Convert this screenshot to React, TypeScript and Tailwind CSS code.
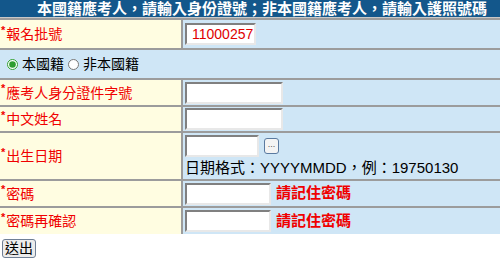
import React, { useState } from "react";

const cjk = "font-['Liberation_Sans','Noto_Sans_CJK_TC',sans-serif]";

const Label = ({ text }: { text: string }) => (
  <div className="flex w-[181px] shrink-0 items-center bg-[#fffde1] pl-[1px] text-[14px] leading-none text-[#f00000]">
    <span className="mr-[1px] -translate-y-[4px] text-[11px] font-bold">*</span>
    <span>{text}</span>
  </div>
);

const TextInput = ({ width, value }: { width: string; value?: string }) => (
  <input
    type="text"
    defaultValue={value}
    className={`${width} h-[22px] border-2 border-t-[#808080] border-l-[#808080] border-r-[#e8e8e8] border-b-[#e8e8e8] bg-white pl-[5px] pr-0 text-[14px] text-[#e00000] outline-none`}
  />
);

const Row = ({
  label,
  height,
  children,
}: {
  label: string;
  height: string;
  children: React.ReactNode;
}) => (
  <div className={`flex gap-[2px] ${height}`}>
    <Label text={label} />
    <div className="flex flex-1 items-center bg-[#cfe6f6] pl-[2px]">{children}</div>
  </div>
);

export default function App() {
  const [nationality, setNationality] = useState("local");

  return (
    <div className={`w-[500px] h-[261px] bg-white ${cjk}`}>
      <div className="flex flex-col gap-[2px] bg-[#9c9c9c]">
        <div className="h-[18px] bg-[#13578b] pl-[37px] text-[15px] leading-[17px] font-bold text-white border-b border-[#c8c8c8]">
          本國籍應考人，請輸入身份證號；非本國籍應考人，請輸入護照號碼
        </div>
        <Row label="報名批號" height="h-[28px]">
          <TextInput width="w-[71px]" value="11000257" />
        </Row>
        <div className="flex h-[28px] items-center gap-[4px] bg-[#cfe6f6] pl-[7px] text-[14px] text-black">
          <label className="flex items-center gap-[4px]">
            <input
              type="radio"
              checked={nationality === "local"}
              onChange={() => setNationality("local")}
              className="h-[11px] w-[11px] accent-[#2f9e2f]"
            />
            本國籍
          </label>
          <label className="flex items-center gap-[4px]">
            <input
              type="radio"
              checked={nationality === "foreign"}
              onChange={() => setNationality("foreign")}
              className="h-[11px] w-[11px]"
            />
            非本國籍
          </label>
        </div>
        <Row label="應考人身分證件字號" height="h-[25px]">
          <TextInput width="w-[98px]" />
        </Row>
        <Row label="中文姓名" height="h-[24px]">
          <TextInput width="w-[98px]" />
        </Row>
        <div className="flex h-[46px] gap-[2px]">
          <Label text="出生日期" />
          <div className="flex flex-1 flex-col justify-center gap-[2px] bg-[#cfe6f6] pl-[2px]">
            <div className="flex items-center gap-[5px]">
              <TextInput width="w-[74px]" />
              <button className="flex h-[16px] w-[15px] items-start justify-center rounded-[3px] border border-[#5a7aa0] bg-[#f4f4f4] text-[9px] leading-[10px] text-[#555]">
                ...
              </button>
            </div>
            <div className="text-[15px] leading-[18px] text-black">
              日期格式：YYYYMMDD，例：19750130
            </div>
          </div>
        </div>
        <Row label="密碼" height="h-[25px]">
          <TextInput width="w-[86px]" />
          <span className="ml-[5px] text-[15px] font-bold text-[#f00000]">請記住密碼</span>
        </Row>
        <Row label="密碼再確認" height="h-[26px]">
          <TextInput width="w-[86px]" />
          <span className="ml-[5px] text-[15px] font-bold text-[#f00000]">請記住密碼</span>
        </Row>
      </div>
      <div className="pt-[2px] pl-[2px]">
        <button className="h-[19px] rounded-[3px] border border-[#6f7f95] bg-[#ececec] px-[2px] text-[14px] leading-[15px] text-black">
          送出
        </button>
      </div>
      <div className="mt-[4px] h-[2px] bg-[#d8d4dc]" />
    </div>
  );
}
